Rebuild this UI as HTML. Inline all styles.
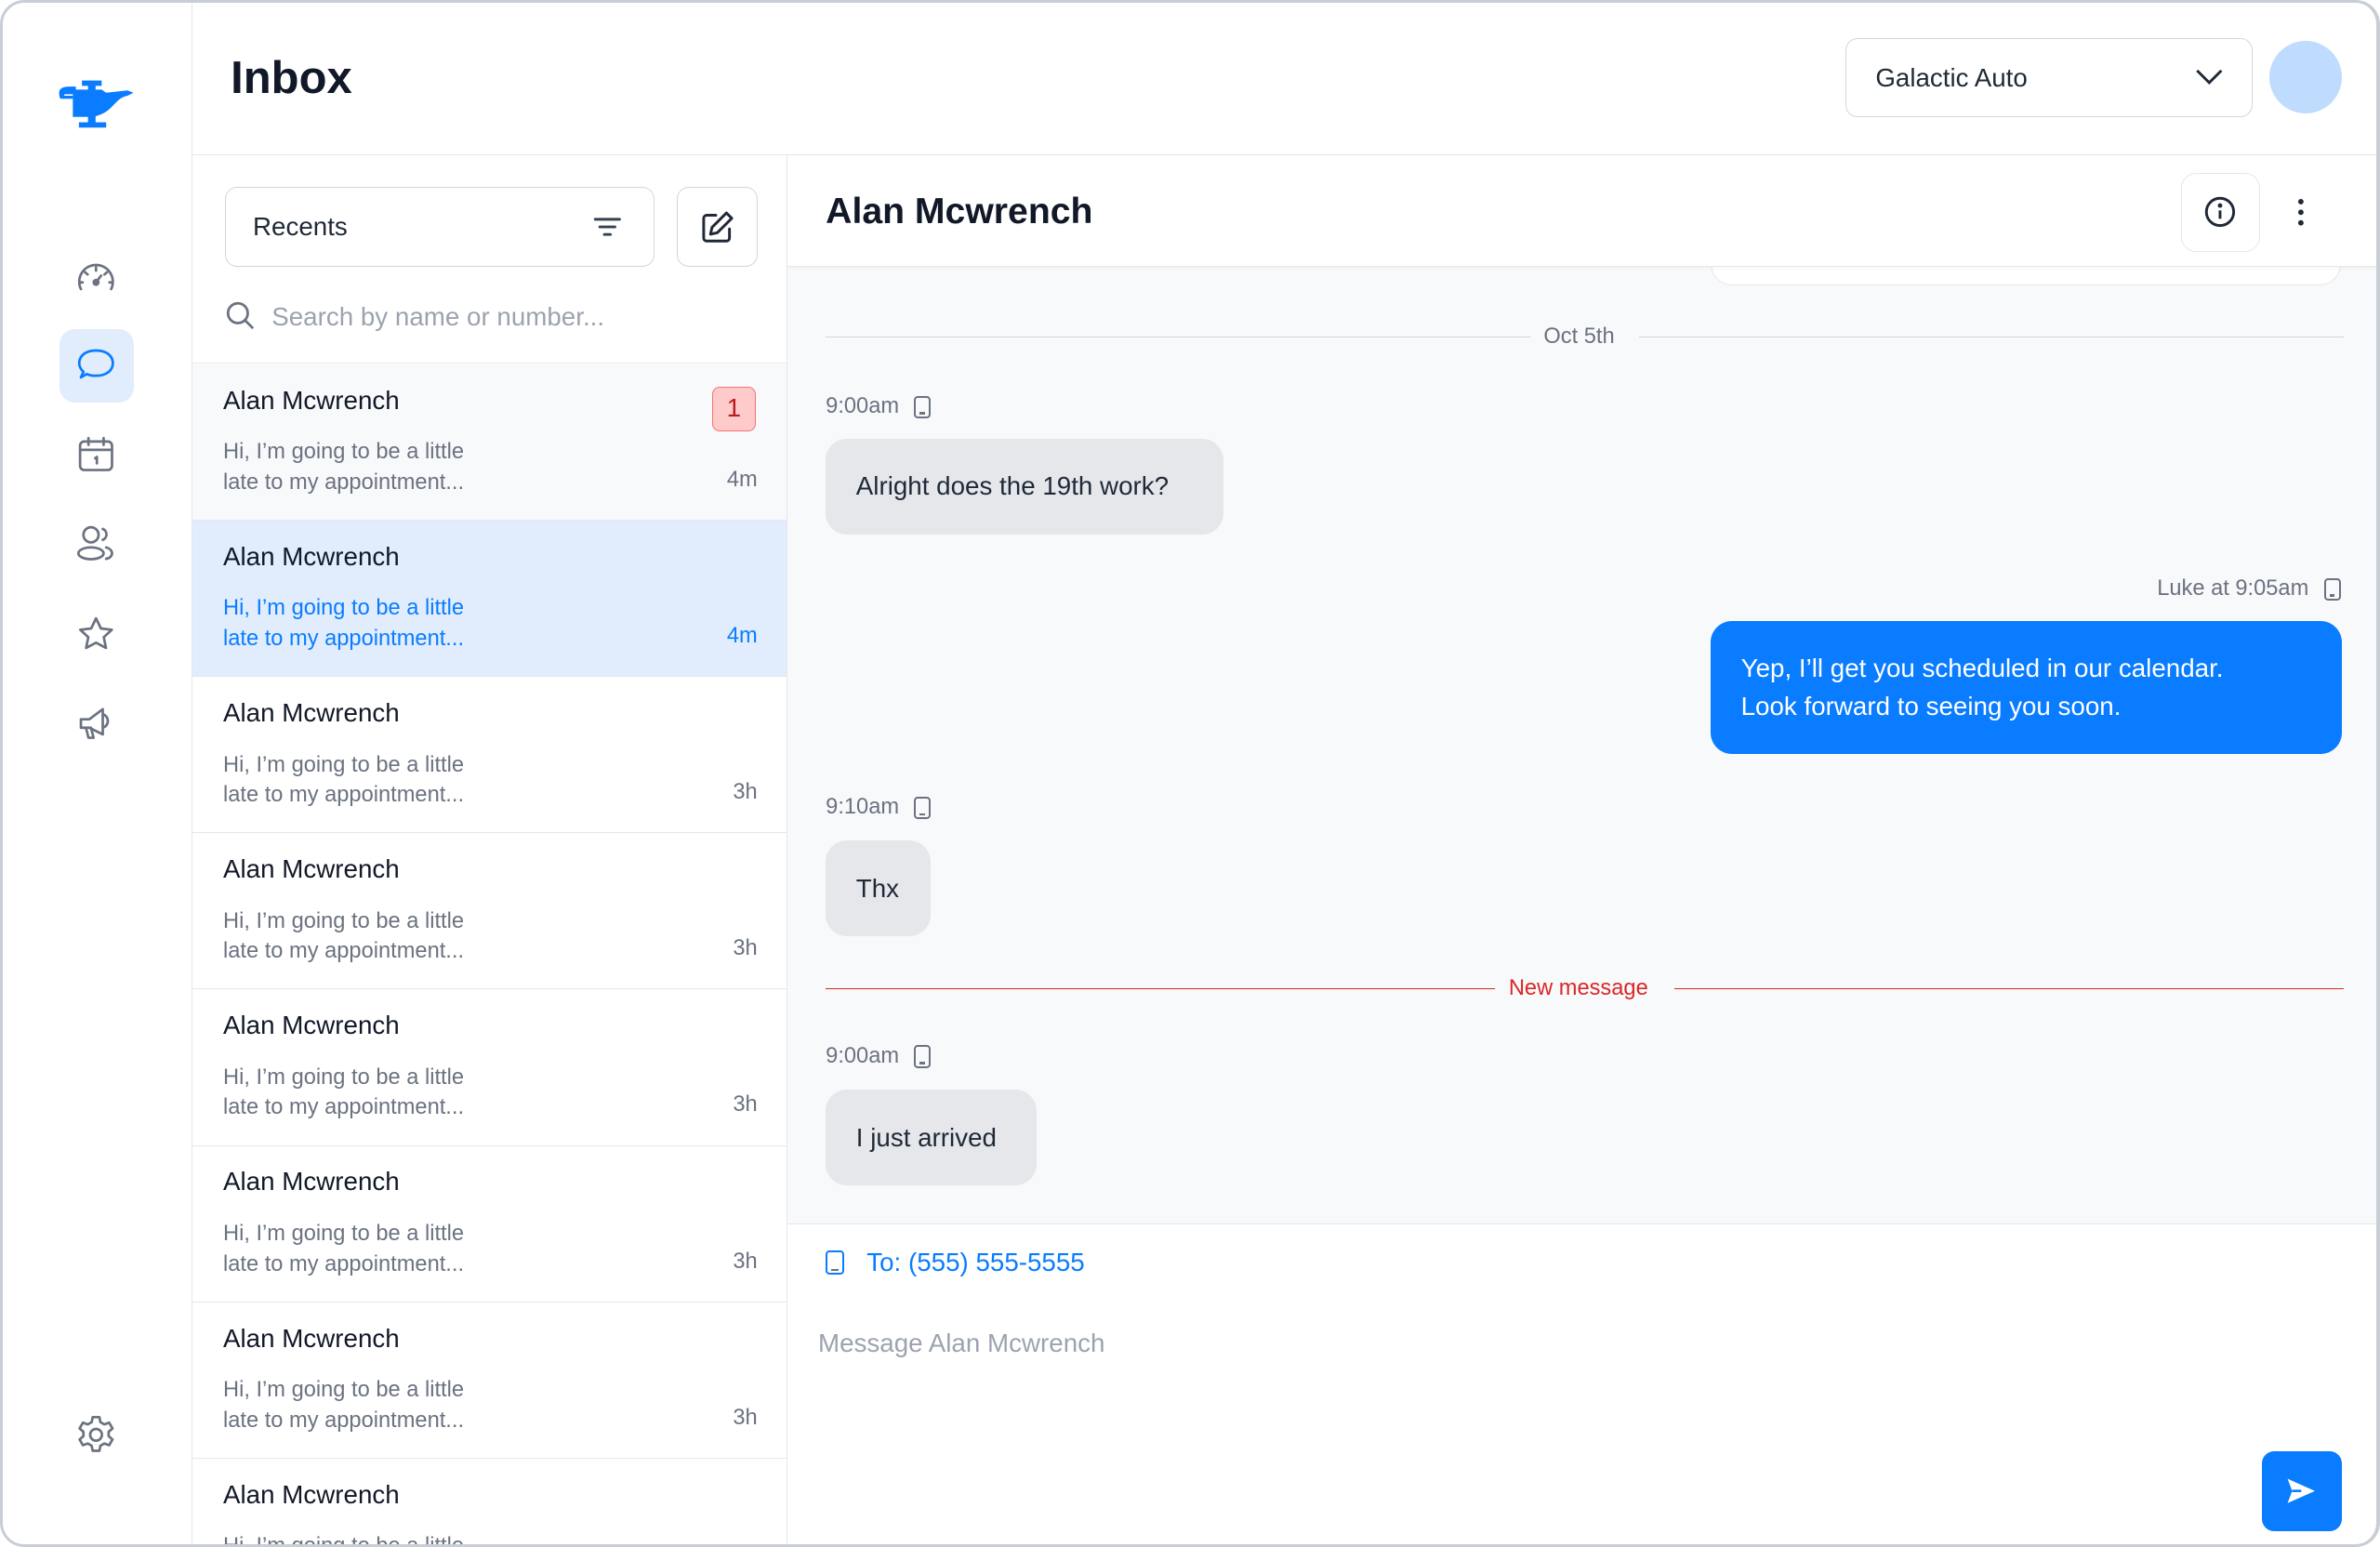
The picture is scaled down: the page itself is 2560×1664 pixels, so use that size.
<!DOCTYPE html>
<html><head><meta charset="utf-8"><style>
*{box-sizing:border-box;margin:0;padding:0}
html,body{width:2560px;height:1664px;overflow:hidden;background:#fff}
#r{zoom:1.63265;width:1568px;height:1019px;position:relative;font-family:"Liberation Sans",sans-serif;color:#111827;overflow:hidden}
.frame{position:absolute;inset:0;border:2px solid #c9ced6;border-radius:16px;border-right-width:3px;pointer-events:none;z-index:10}
.abs{position:absolute}
.side{left:0;top:0;width:127px;height:1019px;border-right:1px solid #e5e7eb;background:#fff}
.ic{position:absolute;left:39px;width:49px;height:48px;display:flex;align-items:center;justify-content:center}
.ic svg{width:31px;height:31px;fill:none;stroke:#6b7280;stroke-width:1.5;stroke-linecap:round;stroke-linejoin:round}
.hdr{left:127px;top:0;right:0;height:102px;border-bottom:1px solid #e5e7eb}
.list{left:127px;top:102px;width:392px;bottom:0;border-right:1px solid #e5e7eb}
.item{position:absolute;left:0;width:391px;height:103px;border-bottom:1px solid #e5e7eb;background:#fff}
.item .n{position:absolute;left:20px;top:14px;font-size:17px;color:#111827}
.item .p{position:absolute;left:20px;top:48px;font-size:14.5px;line-height:20px;color:#6b7280}
.item .t{position:absolute;right:19px;top:68px;font-size:14.5px;color:#6b7280}
.chat{left:519px;top:102px;right:0;bottom:0}
.bub{position:absolute;background:#e5e7eb;border-radius:14px;font-size:17px;color:#1f2937;padding:0 20px;display:flex;align-items:center}
.ts{position:absolute;font-size:14.5px;color:#6b7280;display:flex;align-items:center;gap:10px}
.ph{width:11px;height:15px;border:1.6px solid #6b7280;border-radius:2.5px;position:relative;display:inline-block}
.ph:after{content:"";position:absolute;left:2.5px;right:2.5px;bottom:1.5px;height:1.4px;background:#6b7280}
</style></head><body><div id="r">
<div class="frame"></div>
<div class="abs side">
 <svg class="abs" style="left:38px;top:52px" width="52" height="34" viewBox="0 0 52 34" fill="#0a7cff"><rect x="16" y="1" width="13" height="3.5"/><rect x="20" y="4" width="5" height="4"/><path d="M1 9C1 6 4 5 8 5h4v5H5c-1 0-1 1 0 1h5v2H2C1 12 1 10 1 9z"/><path d="M10 7H29l3 2 14-1.5 4 1.5-4 2c-5 1-7 4-11 8-3 3-7 5-12 6H10z"/><rect x="20" y="24" width="5" height="5"/><rect x="14" y="28.5" width="18" height="3.5"/></svg>
 <div class="ic" style="top:159px"><svg viewBox="0 0 28 28"><path d="M5 21a10 10 0 1 1 18 0"/><path d="M14 8v2M7.5 11l1.5 1.3M20.5 11 19 12.3M6 17H4.5M22 17h1.5M14 17l3-4"/><circle cx="14" cy="17" r="1.4"/></svg></div>
 <div class="ic" style="top:217px;background:#e1edfd;border-radius:10px"><svg viewBox="0 0 28 28" style="stroke:#0a7cff"><path d="M14 5c6 0 10 3 10 7.5S20 20 14 20c-2 0-4-.3-5.5-1L5 21l1.5-3.3C5 16.3 4 14.5 4 12.5 4 8 8 5 14 5z"/></svg></div>
 <div class="ic" style="top:276px"><svg viewBox="0 0 28 28"><rect x="4.5" y="6" width="19" height="17" rx="2.5"/><path d="M4.5 11h19M9.5 4v4M18.5 4v4M13.5 16l1-.8V19"/></svg></div>
 <div class="ic" style="top:334px"><svg viewBox="0 0 28 28"><circle cx="11" cy="9" r="4.5"/><ellipse cx="11" cy="20" rx="7.5" ry="3.5"/><path d="M18 5.5a3.5 3.5 0 0 1 0 6.5M20 16.5c2 .5 3.5 1.8 3.5 3.5s-1.5 3-3.5 3.3"/></svg></div>
 <div class="ic" style="top:394px"><svg viewBox="0 0 28 28"><path d="M14 4.5l2.9 6 6.5.8-4.8 4.4 1.3 6.4L14 19l-5.9 3.1 1.3-6.4-4.8-4.4 6.5-.8z"/></svg></div>
 <div class="ic" style="top:452px"><svg viewBox="0 0 28 28"><path d="M5 12h5l8-6v15l-8-4H5z M8 17l1.5 6h3L11 17M18 9a4 4 0 0 1 3 4 4 4 0 0 1-3 4"/></svg></div>
 <div class="ic" style="top:921px"><svg viewBox="0 0 28 28"><circle cx="14" cy="14" r="3.5"/><path d="M12 3.5h4l.6 3 2.3 1.3 2.9-1 2 3.4-2.3 2v2.6l2.3 2-2 3.4-2.9-1-2.3 1.3-.6 3h-4l-.6-3-2.3-1.3-2.9 1-2-3.4 2.3-2v-2.6l-2.3-2 2-3.4 2.9 1 2.3-1.3z"/></svg></div>
</div>
<div class="abs hdr">
 <div class="abs" style="left:25px;top:34px;font-size:30px;font-weight:bold">Inbox</div>
 <div class="abs" style="left:1089px;top:25px;width:268px;height:52px;border:1px solid #d1d5db;border-radius:8px;font-size:17px;padding:16px 19px;color:#1f2937">Galactic Auto
  <svg class="abs" style="right:18px;top:18px" width="20" height="14" viewBox="0 0 20 14"><path d="M2 3l8 8 8-8" fill="none" stroke="#1f2937" stroke-width="1.8"/></svg></div>
 <div class="abs" style="left:1368px;top:27px;width:48px;height:48px;border-radius:50%;background:#bfdbfe"></div>
</div>
<div class="abs list">
 <div class="abs" style="left:21px;top:21px;width:283px;height:53px;border:1px solid #d1d5db;border-radius:8px;font-size:17px;padding:16px 18px;color:#1f2937">Recents
  <svg class="abs" style="right:20px;top:18px" width="20" height="16" viewBox="0 0 20 16"><path d="M2 3h16M5 8h10M8 13h4" stroke="#374151" stroke-width="1.8" stroke-linecap="round"/></svg></div>
 <div class="abs" style="left:319px;top:21px;width:53px;height:53px;border:1px solid #d1d5db;border-radius:8px">
  <svg class="abs" style="left:14px;top:14px" width="24" height="24" viewBox="0 0 24 24" fill="none" stroke="#1f2937" stroke-width="1.8" stroke-linecap="round" stroke-linejoin="round"><path d="M11 4H5a2 2 0 0 0-2 2v13a2 2 0 0 0 2 2h13a2 2 0 0 0 2-2v-6"/><path d="M18 2.5l3.5 3.5L12 15.5l-4.5 1 1-4.5z"/></svg></div>
 <svg class="abs" style="left:21px;top:96px" width="20" height="20" viewBox="0 0 20 20" fill="none" stroke="#6b7280" stroke-width="1.7"><circle cx="8.5" cy="8.5" r="6.5"/><path d="M13.5 13.5l5 5"/></svg>
 <div class="abs" style="left:52px;top:97px;font-size:17px;color:#9ca3af">Search by name or number...</div>
 <div class="abs" style="left:0;top:137px;width:391px;border-top:1px solid #e5e7eb"></div>
 <div class="item" style="top:138px;background:#f8f9fb"><div class="n">Alan Mcwrench</div><div class="p">Hi, I’m going to be a little<br>late to my appointment...</div><div class="t">4m</div>
  <div class="abs" style="right:20px;top:15px;width:29px;height:29px;background:#fecaca;border:1px solid #f87171;border-radius:5px;color:#b91c1c;font-size:17px;text-align:center;line-height:27px">1</div></div>
 <div class="item" style="top:241px;background:#e1edfd"><div class="n">Alan Mcwrench</div><div class="p" style="color:#0a7cff">Hi, I’m going to be a little<br>late to my appointment...</div><div class="t" style="color:#0a7cff">4m</div></div>
 <div class="item" style="top:344px"><div class="n">Alan Mcwrench</div><div class="p">Hi, I’m going to be a little<br>late to my appointment...</div><div class="t">3h</div></div>
 <div class="item" style="top:447px"><div class="n">Alan Mcwrench</div><div class="p">Hi, I’m going to be a little<br>late to my appointment...</div><div class="t">3h</div></div>
 <div class="item" style="top:550px"><div class="n">Alan Mcwrench</div><div class="p">Hi, I’m going to be a little<br>late to my appointment...</div><div class="t">3h</div></div>
 <div class="item" style="top:653px"><div class="n">Alan Mcwrench</div><div class="p">Hi, I’m going to be a little<br>late to my appointment...</div><div class="t">3h</div></div>
 <div class="item" style="top:756px"><div class="n">Alan Mcwrench</div><div class="p">Hi, I’m going to be a little<br>late to my appointment...</div><div class="t">3h</div></div>
 <div class="item" style="top:859px"><div class="n">Alan Mcwrench</div><div class="p">Hi, I’m going to be a little<br>late to my appointment...</div><div class="t">3h</div></div>
</div>
<div class="abs chat">
 <div class="abs" style="left:0;top:74px;right:0;height:630px;background:#f8f9fb"></div>
 <div class="abs" style="left:608px;top:60px;width:415px;height:26px;border:1px solid #e5e7eb;border-radius:0 0 14px 14px;background:#fff"></div>
 <div class="abs" style="left:0;top:0;right:0;height:74px;background:#fff;border-bottom:1px solid #e5e7eb;box-shadow:0 1px 3px rgba(0,0,0,.04)">
  <div class="abs" style="left:25px;top:24px;font-size:24px;font-weight:bold">Alan Mcwrench</div>
  <div class="abs" style="left:918px;top:12px;width:52px;height:52px;border:1px solid #e5e7eb;border-radius:10px">
   <svg class="abs" style="left:14px;top:14px" width="22" height="22" viewBox="0 0 22 22" fill="none" stroke="#1f2937" stroke-width="1.8"><circle cx="11" cy="11" r="9"/><path d="M11 10v5.5"/><circle cx="11" cy="6.8" r=".6" fill="#1f2937"/></svg></div>
  <svg class="abs" style="left:994px;top:28px" width="6" height="20" viewBox="0 0 6 20" fill="#1f2937"><circle cx="3" cy="3" r="1.8"/><circle cx="3" cy="10" r="1.8"/><circle cx="3" cy="17" r="1.8"/></svg>
 </div>
 <div class="abs" style="left:25px;top:120px;width:464px;border-top:1px solid #d1d5db"></div>
 <div class="abs" style="left:498px;top:112px;font-size:14.5px;color:#6b7280">Oct 5th</div>
 <div class="abs" style="left:561px;top:120px;width:464px;border-top:1px solid #d1d5db"></div>
 <div class="ts" style="left:25px;top:158px">9:00am <span class="ph"></span></div>
 <div class="bub" style="left:25px;top:187px;width:262px;height:63px">Alright does the 19th work?</div>
 <div class="ts" style="right:26px;top:278px">Luke at 9:05am <span class="ph"></span></div>
 <div class="bub" style="left:608px;top:307px;width:416px;height:88px;background:#0a7cff;color:#fff;line-height:25px">Yep, I’ll get you scheduled in our calendar.<br>Look forward to seeing you soon.</div>
 <div class="ts" style="left:25px;top:422px">9:10am <span class="ph"></span></div>
 <div class="bub" style="left:25px;top:452px;width:69px;height:63px">Thx</div>
 <div class="abs" style="left:25px;top:549px;width:441px;border-top:1px solid #dc2626"></div>
 <div class="abs" style="left:475px;top:541px;font-size:14.5px;color:#dc2626">New message</div>
 <div class="abs" style="left:584px;top:549px;width:441px;border-top:1px solid #dc2626"></div>
 <div class="ts" style="left:25px;top:586px">9:00am <span class="ph"></span></div>
 <div class="bub" style="left:25px;top:616px;width:139px;height:63px">I just arrived</div>
 <div class="abs" style="left:0;top:704px;right:0;border-top:1px solid #e5e7eb"></div>
 <span class="ph" style="position:absolute;left:25px;top:722px;border-color:#0a7cff;width:12px;height:16px"></span>
 <div class="abs" style="left:52px;top:720px;font-size:17px;color:#0a7cff">To: (555) 555-5555</div>
 <div class="abs" style="left:20px;top:773px;font-size:17px;color:#9ca3af">Message Alan Mcwrench</div>
 <div class="abs" style="left:971px;top:854px;width:53px;height:53px;border-radius:8px;background:#0a7cff">
  <svg class="abs" style="left:16px;top:17px" width="20" height="18" viewBox="0 0 20 18"><path d="M1 1l18 8-18 8 3-8z" fill="#fff"/><path d="M4 9h6" stroke="#0a7cff" stroke-width="1.6"/></svg></div>
</div>
</div></body></html>
